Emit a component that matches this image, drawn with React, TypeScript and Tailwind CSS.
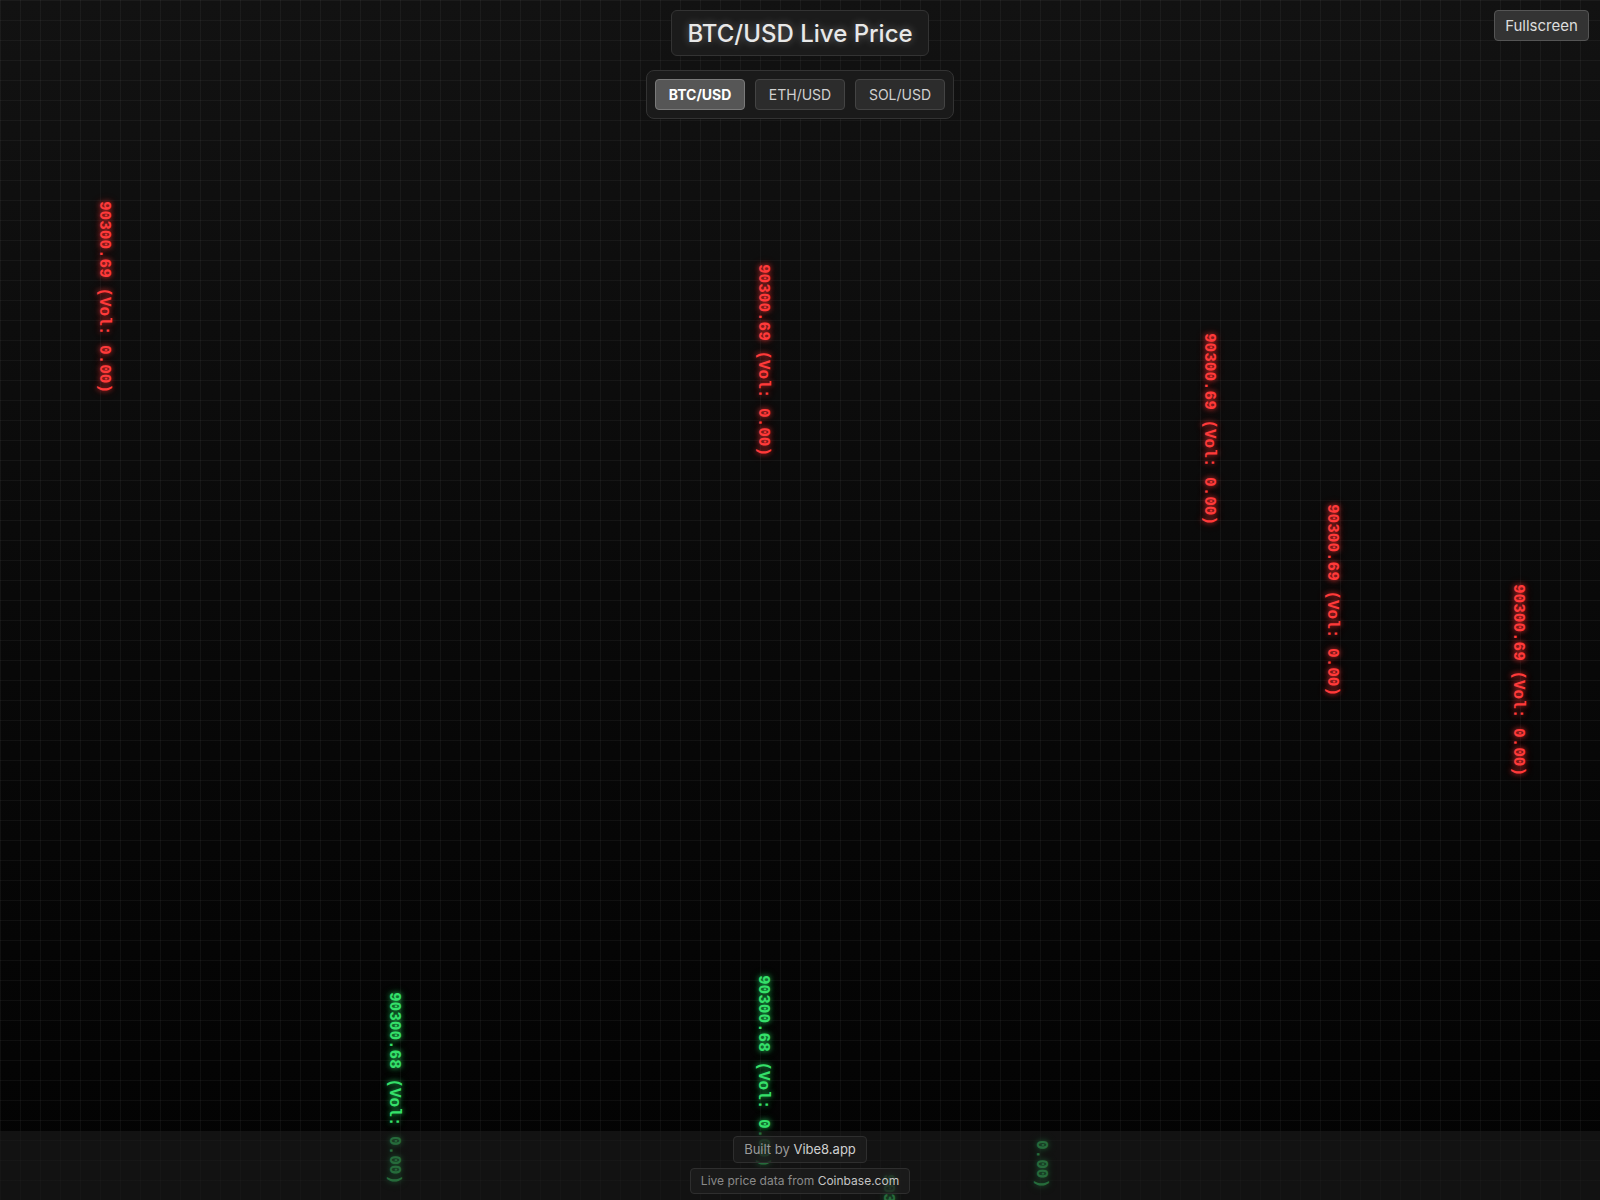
const mono = "font-['Liberation_Mono',monospace] font-bold";

type Drop = { left: number; top: number; text: string; up: boolean };

const drops: Drop[] = [
  { left: 96, top: 201, text: "90300.69 (Vol: 0.00)", up: false },
  { left: 755, top: 264, text: "90300.69 (Vol: 0.00)", up: false },
  { left: 1201, top: 333, text: "90300.69 (Vol: 0.00)", up: false },
  { left: 1324, top: 504, text: "90300.69 (Vol: 0.00)", up: false },
  { left: 1510, top: 584, text: "90300.69 (Vol: 0.00)", up: false },
  { left: 386, top: 992, text: "90300.68 (Vol: 0.00)", up: true },
  { left: 755, top: 975, text: "90300.68 (Vol: 0.00)", up: true },
  { left: 1033, top: 1140, text: "0.00)", up: true },
  { left: 880, top: 1174, text: "90300.68 (Vol: 0.00)", up: true },
];

function Rain() {
  return (
    <div className="absolute inset-0">
      {drops.map((d, i) => (
        <span
          key={i}
          className={`absolute whitespace-nowrap text-[16px] leading-[16px] [writing-mode:vertical-rl] ${mono} ${
            d.up
              ? "text-[#35e06a] [text-shadow:0_0_5px_rgba(40,220,100,0.8),0_0_10px_rgba(40,220,100,0.35)]"
              : "text-[#ff3a3a] [text-shadow:0_0_5px_rgba(255,50,50,0.8),0_0_10px_rgba(255,50,50,0.35)]"
          }`}
          style={{ left: d.left, top: d.top }}
        >
          {d.text}
        </span>
      ))}
    </div>
  );
}

export default function App() {
  return (
    <div className="relative flex h-screen w-full flex-col overflow-hidden bg-gradient-to-b from-[#121212] to-[#030303] font-['Inter',sans-serif]">
      <div className="absolute inset-0 bg-[linear-gradient(to_right,rgba(255,255,255,0.045)_1px,transparent_1px),linear-gradient(to_bottom,rgba(255,255,255,0.045)_1px,transparent_1px)] bg-[size:20px_20px]" />
      <Rain />

      <header className="relative z-10 flex flex-col items-center pt-[10px]">
        <h1 className="rounded-md border border-[#333] bg-[#1b1b1b] px-[15px] pb-[6px] pt-[8px] text-[24px] font-medium leading-[30px] text-[#e8e8e8] [text-shadow:0_0_8px_rgba(255,255,255,0.35)]">
          BTC/USD Live Price
        </h1>
        <div className="mt-[14px] flex gap-[10px] rounded-lg border border-[#333] bg-[#1a1a1a] p-[8px]">
          <button className="h-[31px] w-[90px] rounded border border-[#7a7a7a] bg-[#565656] text-[14px] font-bold text-white">
            BTC/USD
          </button>
          <button className="h-[31px] w-[90px] rounded border border-[#444] bg-[#2c2c2c] text-[14px] text-[#d0d0d0]">
            ETH/USD
          </button>
          <button className="h-[31px] w-[90px] rounded border border-[#444] bg-[#2c2c2c] text-[14px] text-[#d0d0d0]">
            SOL/USD
          </button>
        </div>
      </header>

      <button className="absolute right-[11px] top-[10px] z-10 h-[31px] w-[95px] rounded border border-[#555] bg-[#333] pt-[1px] text-[15px] text-[#ddd]">
        Fullscreen
      </button>

      <footer className="relative z-10 mt-auto flex h-[69px] flex-col items-center gap-[5px] bg-[rgba(28,28,28,0.6)] pt-[5px]">
        <div className="flex h-[27px] items-center rounded border border-[#2e2e2e] bg-[rgba(30,30,30,0.7)] px-[10px] text-[13px] text-[#9a9a9a]">
          Built by&nbsp;<span className="text-[#cfcfcf]">Vibe8.app</span>
        </div>
        <div className="flex h-[26px] items-center rounded border border-[#2e2e2e] bg-[rgba(30,30,30,0.7)] px-[10px] text-[12px] text-[#8a8a8a]">
          Live price data from&nbsp;<span className="text-[#c4c4c4]">Coinbase.com</span>
        </div>
      </footer>
    </div>
  );
}
